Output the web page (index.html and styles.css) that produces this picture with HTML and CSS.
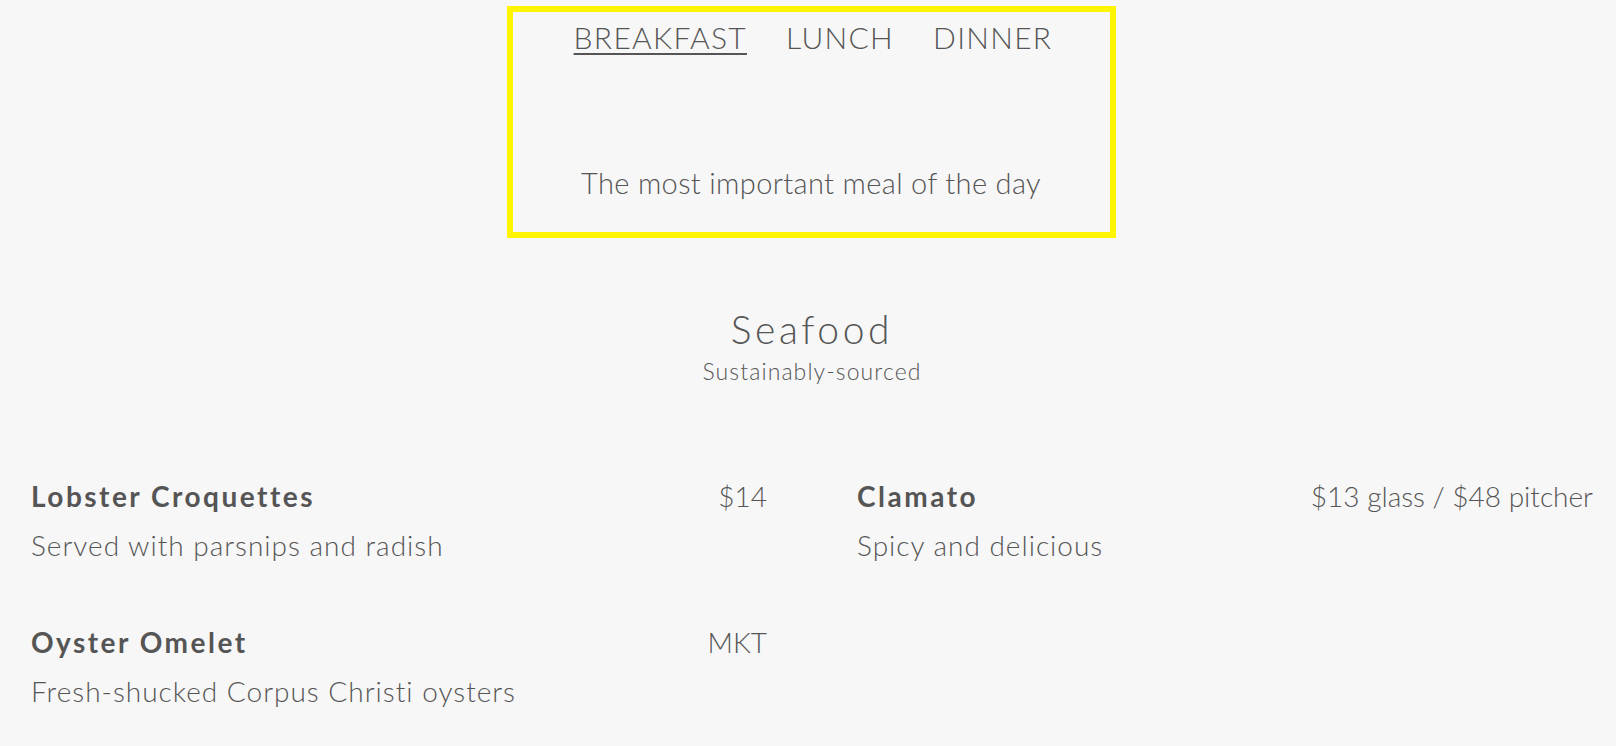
FILE: index.html
```html
<!DOCTYPE html>
<html lang="en">
<head>
<meta charset="utf-8">
<title>Menu</title>
<link rel="stylesheet" href="styles.css">
</head>
<body>
<div class="page">
  <header class="menu-head">
    <nav class="tabs">
      <a class="tab active" href="#">BREAKFAST</a>
      <a class="tab" href="#">LUNCH</a>
      <a class="tab" href="#">DINNER</a>
    </nav>
    <p class="tagline">The most important meal of the day</p>
  </header>

  <section class="section">
    <h2 class="section-title">Seafood</h2>
    <p class="section-sub">Sustainably-sourced</p>
  </section>

  <div class="items">
    <div class="item">
      <div class="item-row">
        <span class="item-name">Lobster Croquettes</span>
        <span class="item-price">$14</span>
      </div>
      <p class="item-desc">Served with parsnips and radish</p>
    </div>
    <div class="item">
      <div class="item-row">
        <span class="item-name">Clamato</span>
        <span class="item-price">$13 glass / $48 pitcher</span>
      </div>
      <p class="item-desc">Spicy and delicious</p>
    </div>
    <div class="item">
      <div class="item-row">
        <span class="item-name">Oyster Omelet</span>
        <span class="item-price">MKT</span>
      </div>
      <p class="item-desc">Fresh-shucked Corpus Christi oysters</p>
    </div>
  </div>
</div>
</body>
</html>
```

FILE: styles.css
```css
html, body {
  margin: 0;
  padding: 0;
  background: #f7f7f7;
}

body {
  font-family: Lato, "Open Sans", "Liberation Sans", sans-serif;
  color: #555555;
}

.page {
  padding: 6px 23px 0 31px;
}

.menu-head {
  width: 597px;
  margin: 0 auto;
  border: 6px solid #fff500;
  padding: 7px 0 31px;
  text-align: center;
  transform: translateX(-1px);
}

.tabs {
  display: flex;
  justify-content: center;
  gap: 39px;
  padding-left: 4px;
  font-size: 30px;
  line-height: 36px;
  font-weight: 300;
}

.tab {
  color: #555555;
  text-decoration: none;
  letter-spacing: 1.3px;
}

.tab.active {
  text-decoration: underline;
  text-decoration-thickness: 2px;
  text-underline-offset: 4px;
}

.tagline {
  margin: 110px 0 0;
  font-size: 29px;
  line-height: 36px;
  font-weight: 300;
  letter-spacing: 0.35px;
}

.section {
  text-align: center;
  margin-top: 68px;
}

.section-title {
  margin: 0;
  font-size: 39px;
  line-height: 47px;
  font-weight: 300;
  letter-spacing: 3.6px;
}

.section-sub {
  margin: 4px 0 0;
  font-size: 23px;
  line-height: 28px;
  font-weight: 300;
  letter-spacing: 1.1px;
}

.items {
  display: grid;
  grid-template-columns: 1fr 1fr;
  column-gap: 90px;
  row-gap: 63px;
  margin-top: 94px;
}

.item-row {
  display: flex;
  justify-content: space-between;
  align-items: baseline;
  font-size: 28px;
  line-height: 34px;
}

.item-name {
  font-weight: 700;
  letter-spacing: 2.5px;
}

.item-price {
  font-weight: 300;
}

.item-desc {
  margin: 15px 0 0;
  font-size: 28px;
  line-height: 34px;
  font-weight: 300;
  letter-spacing: 1px;
}
```
